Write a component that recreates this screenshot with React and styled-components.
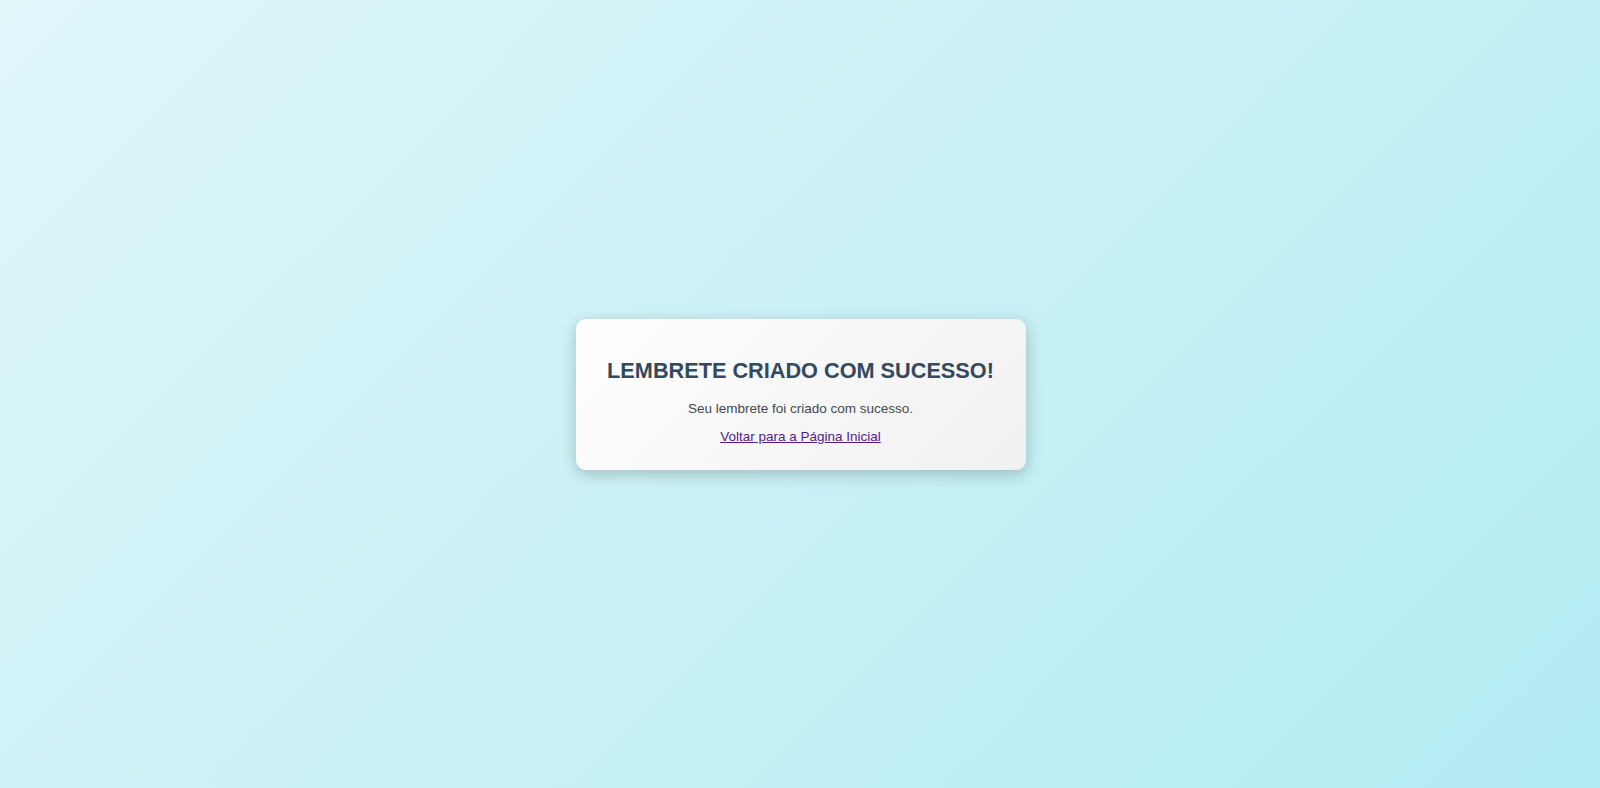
import React from "react";
import styled, { createGlobalStyle } from "styled-components";

const GlobalStyle = createGlobalStyle`
  html, body {
    margin: 0;
    padding: 0;
    height: 100%;
  }
  body {
    font-family: "Liberation Sans", Arial, sans-serif;
    background: linear-gradient(135deg, #e0f7fa, #b2ebf2);
    background-attachment: fixed;
  }
  #root {
    height: 100%;
  }
`;

const Page = styled.main`
  min-height: 100vh;
  display: flex;
  align-items: center;
  justify-content: center;
  padding-left: 1px;
  box-sizing: border-box;
`;

const Card = styled.section`
  width: 450px;
  box-sizing: border-box;
  padding: 39px 30px 26px;
  border-radius: 10px;
  background: linear-gradient(135deg, #ffffff, #f0f0f0);
  box-shadow: 0 4px 16px rgba(0, 0, 0, 0.22);
  text-align: center;
`;

const Title = styled.h1`
  margin: 0 0 17px;
  font-size: 21.7px;
  font-weight: 700;
  line-height: normal;
  color: #34495e;
`;

const Text = styled.p`
  margin: 0 0 ${(p) => p.$gap || 0}px;
  font-size: 13.5px;
  line-height: normal;
  color: #3f4850;
`;

const Link = styled.a`
  color: #551a8b;
  text-decoration: underline;
`;

export default function App() {
  return (
    <>
      <GlobalStyle />
      <Page>
        <Card>
          <Title>LEMBRETE CRIADO COM SUCESSO!</Title>
          <Text $gap={13}>Seu lembrete foi criado com sucesso.</Text>
          <Text>
            <Link href="#">Voltar para a Página Inicial</Link>
          </Text>
        </Card>
      </Page>
    </>
  );
}
